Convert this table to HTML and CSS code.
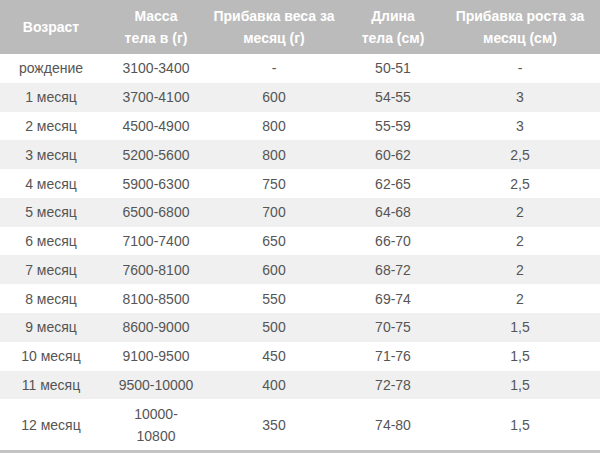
FILE: index.html
```html
<!DOCTYPE html>
<html lang="ru">
<head>
<meta charset="utf-8">
<link rel="stylesheet" href="styles.css">
</head>
<body>
<table class="growth">
  <colgroup>
    <col class="c1"><col class="c2"><col class="c3"><col class="c4"><col class="c5">
  </colgroup>
  <thead>
    <tr>
      <th>Возраст</th>
      <th>Масса<br>тела в (г)</th>
      <th>Прибавка веса за<br>месяц (г)</th>
      <th>Длина<br>тела (см)</th>
      <th class="last">Прибавка роста за<br>месяц (см)</th>
    </tr>
  </thead>
  <tbody>
    <tr><td>рождение</td><td>3100-3400</td><td>-</td><td>50-51</td><td class="last">-</td></tr>
    <tr><td>1 месяц</td><td>3700-4100</td><td>600</td><td>54-55</td><td class="last">3</td></tr>
    <tr><td>2 месяц</td><td>4500-4900</td><td>800</td><td>55-59</td><td class="last">3</td></tr>
    <tr><td>3 месяц</td><td>5200-5600</td><td>800</td><td>60-62</td><td class="last">2,5</td></tr>
    <tr><td>4 месяц</td><td>5900-6300</td><td>750</td><td>62-65</td><td class="last">2,5</td></tr>
    <tr><td>5 месяц</td><td>6500-6800</td><td>700</td><td>64-68</td><td class="last">2</td></tr>
    <tr><td>6 месяц</td><td>7100-7400</td><td>650</td><td>66-70</td><td class="last">2</td></tr>
    <tr><td>7 месяц</td><td>7600-8100</td><td>600</td><td>68-72</td><td class="last">2</td></tr>
    <tr><td>8 месяц</td><td>8100-8500</td><td>550</td><td>69-74</td><td class="last">2</td></tr>
    <tr><td>9 месяц</td><td>8600-9000</td><td>500</td><td>70-75</td><td class="last">1,5</td></tr>
    <tr><td>10 месяц</td><td>9100-9500</td><td>450</td><td>71-76</td><td class="last">1,5</td></tr>
    <tr><td>11 месяц</td><td>9500-10000</td><td>400</td><td>72-78</td><td class="last">1,5</td></tr>
    <tr><td>12 месяц</td><td>10000-<br>10800</td><td>350</td><td>74-80</td><td class="last">1,5</td></tr>
  </tbody>
</table>
</body>
</html>
```

FILE: styles.css
```css
html, body {
  margin: 0;
  padding: 0;
  background: #ffffff;
}

.growth {
  width: 600px;
  border-collapse: collapse;
  table-layout: fixed;
  font-family: "Liberation Sans", Arial, sans-serif;
  font-size: 14px;
  color: #555555;
  border-bottom: 4px solid #c4c4c4;
}

.c1 { width: 102px; }
.c2 { width: 108px; }
.c3 { width: 128px; }
.c4 { width: 110px; }
.c5 { width: 152px; }

.growth th {
  background: #bbbbbb;
  color: #ffffff;
  font-weight: bold;
  line-height: 22px;
  padding: 5px 0;
  text-align: center;
  white-space: nowrap;
}

.growth td {
  text-align: center;
  line-height: 22px;
  padding: 3.4px 0;
  white-space: nowrap;
}

.growth .last {
  padding-right: 8px;
}

.growth tbody tr:nth-child(even) td {
  background: #f0f0f0;
}
```
